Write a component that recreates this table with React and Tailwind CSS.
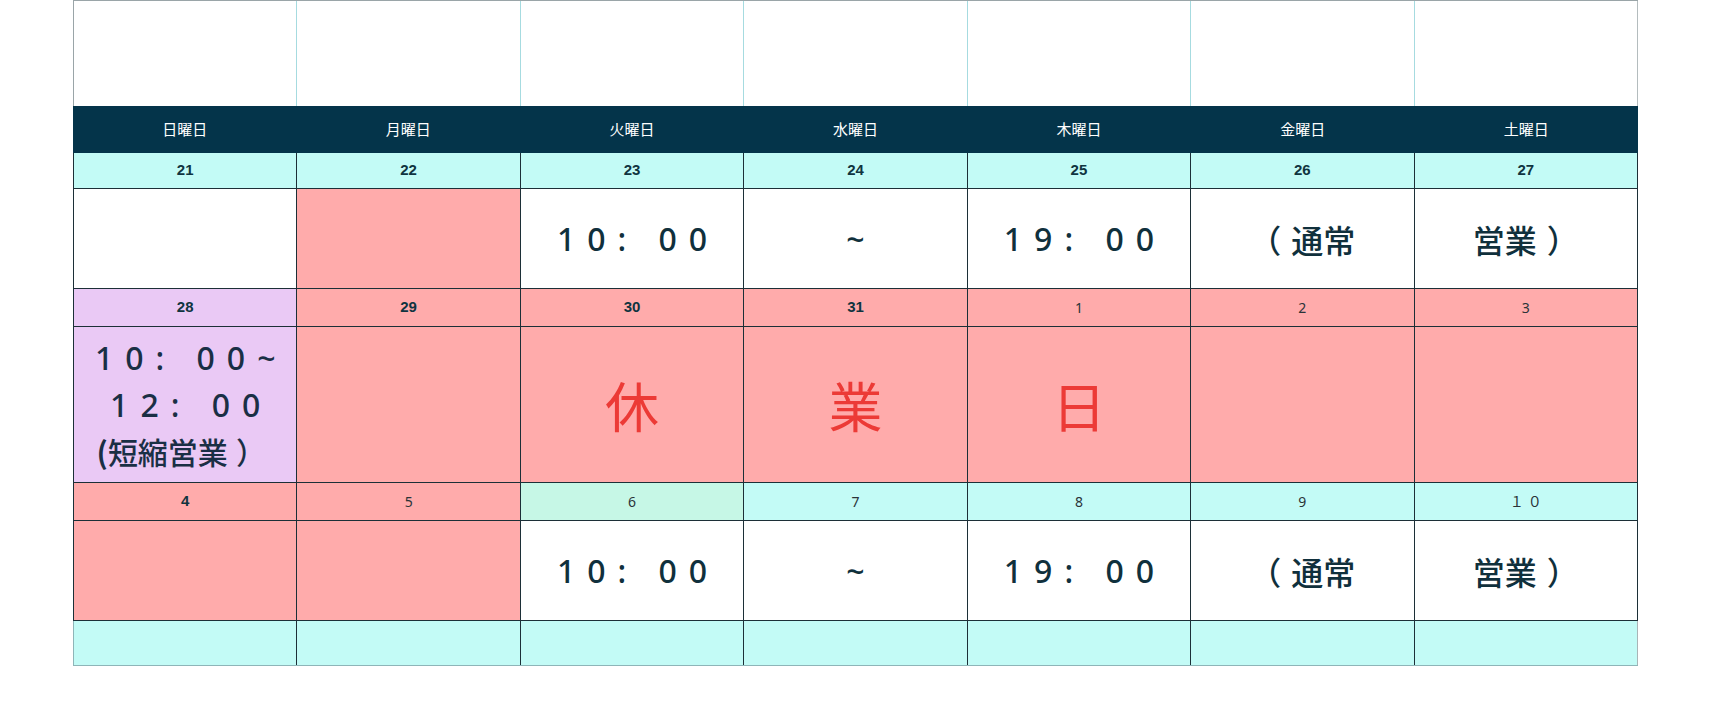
import React from "react";

const CYAN = "bg-[#c3fbf6]";
const PINK = "bg-[#ffabab]";
const PURPLE = "bg-[#eac9f5]";
const GREEN = "bg-[#c6f7e6]";
const WHITE = "bg-white";

const days = ["日曜日", "月曜日", "火曜日", "水曜日", "木曜日", "金曜日", "土曜日"];

const weeks = [
  {
    dates: [
      ["21", CYAN, true],
      ["22", CYAN, true],
      ["23", CYAN, true],
      ["24", CYAN, true],
      ["25", CYAN, true],
      ["26", CYAN, true],
      ["27", CYAN, true],
    ],
    h: "h-[100px]",
    cells: [
      [WHITE, null],
      [PINK, null],
      [WHITE, "time", "10: 00"],
      [WHITE, "time", "~"],
      [WHITE, "time", "19: 00"],
      [WHITE, "open", "通常"],
      [WHITE, "close", "営業"],
    ],
  },
  {
    dates: [
      ["28", PURPLE, true],
      ["29", PINK, true],
      ["30", PINK, true],
      ["31", PINK, true],
      ["1", PINK, false],
      ["2", PINK, false],
      ["3", PINK, false],
    ],
    h: "h-[156px]",
    cells: [
      [PURPLE, "short"],
      [PINK, null],
      [PINK, "red", "休"],
      [PINK, "red", "業"],
      [PINK, "red", "日"],
      [PINK, null],
      [PINK, null],
    ],
  },
  {
    dates: [
      ["4", PINK, true],
      ["5", PINK, false],
      ["6", GREEN, false],
      ["7", CYAN, false],
      ["8", CYAN, false],
      ["9", CYAN, false],
      ["１０", CYAN, false],
    ],
    h: "h-[100px]",
    cells: [
      [PINK, null],
      [PINK, null],
      [WHITE, "time", "10: 00"],
      [WHITE, "time", "~"],
      [WHITE, "time", "19: 00"],
      [WHITE, "open", "通常"],
      [WHITE, "close", "営業"],
    ],
  },
];

function Content({ kind, text }) {
  if (kind === "time")
    return (
      <span className="pl-[12px] font-['Noto_Sans','Noto_Sans_CJK_JP',sans-serif] text-[32px] font-medium tracking-[12px] text-[#10303c]">
        {text}
      </span>
    );
  if (kind === "open")
    return (
      <span className="flex font-['Noto_Sans_CJK_JP',sans-serif] text-[32px] font-medium text-[#10303c]">
        <span className="mr-[10px]">（</span>
        {text}
      </span>
    );
  if (kind === "close")
    return (
      <span className="flex font-['Noto_Sans_CJK_JP',sans-serif] text-[32px] font-medium text-[#10303c]">
        {text}
        <span className="ml-[10px]">）</span>
      </span>
    );
  if (kind === "red")
    return (
      <span className="font-['Noto_Sans_CJK_JP',sans-serif] text-[54px] text-[#ec3a36]">
        {text}
      </span>
    );
  if (kind === "short")
    return (
      <div className="flex flex-col items-center leading-[47px] text-[#1a2f45]">
        <span className="pl-[12px] font-['Noto_Sans','Noto_Sans_CJK_JP',sans-serif] text-[32px] font-medium tracking-[12px]">
          10: 00~
        </span>
        <span className="pl-[12px] font-['Noto_Sans','Noto_Sans_CJK_JP',sans-serif] text-[32px] font-medium tracking-[12px]">
          12: 00
        </span>
        <span className="flex font-['Noto_Sans_CJK_JP',sans-serif] text-[30px] font-medium">
          <span className="font-bold">(</span>短縮営業
          <span className="ml-[8px] mr-[8px]">）</span>
        </span>
      </div>
    );
  return null;
}

export default function App() {
  return (
    <div className="h-[727px] w-[1712px] bg-white pl-[73px]">
      <div className="w-[1565px]">
        <div className="grid h-[106px] grid-cols-7 border-l border-t border-[#9aa5a8]">
          {days.map((d) => (
            <div key={d} className="border-r border-[#a6dbe0] last:border-[#b4bcbe]" />
          ))}
        </div>
        <div className="grid h-[47px] grid-cols-7 bg-[#04344a]">
          {days.map((d) => (
            <div
              key={d}
              className="flex items-center justify-center font-['Noto_Sans_CJK_JP',sans-serif] text-[15px] text-white"
            >
              {d}
            </div>
          ))}
        </div>
        {weeks.map((w, i) => (
          <div key={i} className="border-l border-[#1c2f37]">
            <div className={`grid grid-cols-7 ${i === 0 ? "h-[36px]" : "h-[38px]"}`}>
              {w.dates.map(([n, bg, bold], j) => (
                <div
                  key={j}
                  className={`flex items-center justify-center border-b border-r border-[#1c2f37] ${bg} ${
                    bold
                      ? "font-['Liberation_Sans',sans-serif] text-[15px] font-bold text-[#0f3440]"
                      : "pl-[4px] font-['Noto_Sans','Noto_Sans_CJK_JP',sans-serif] text-[14px] tracking-[4px] text-[#2a3338]"
                  }`}
                >
                  {n}
                </div>
              ))}
            </div>
            <div className={`grid grid-cols-7 ${w.h}`}>
              {w.cells.map(([bg, kind, text], j) => (
                <div
                  key={j}
                  className={`flex items-center justify-center border-b border-r border-[#1c2f37] ${bg}`}
                >
                  <Content kind={kind} text={text} />
                </div>
              ))}
            </div>
          </div>
        ))}
        <div className="grid h-[45px] grid-cols-7 border-b border-l border-[#8eb5b8]">
          {days.map((d) => (
            <div key={d} className={`border-r border-[#1c2f37] last:border-[#a9b4b6] ${CYAN}`} />
          ))}
        </div>
      </div>
    </div>
  );
}
